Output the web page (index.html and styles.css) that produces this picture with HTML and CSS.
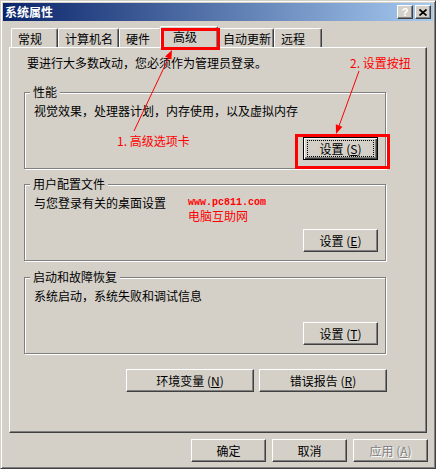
FILE: index.html
```html
<!DOCTYPE html>
<html lang="zh-CN">
<head>
<meta charset="utf-8">
<title>系统属性</title>
<link rel="stylesheet" href="styles.css">
</head>
<body>
<div class="window">
  <div class="titlebar">
    <span class="title">系统属性</span>
    <div class="caption-btns">
      <button class="cap-btn help">?</button>
      <button class="cap-btn close"><svg width="8" height="7" viewBox="0 0 8 7"><path d="M0.5 0.5L7.5 6.5M7.5 0.5L0.5 6.5" stroke="#000" stroke-width="1.7" fill="none"/></svg></button>
    </div>
  </div>

  <div class="tabs">
    <div class="tab w-general">常规</div>
    <div class="tab w-name">计算机名</div>
    <div class="tab w-hw">硬件</div>
    <div class="tab w-adv active">高级</div>
    <div class="tab w-upd">自动更新</div>
    <div class="tab w-remote">远程</div>
  </div>

  <div class="panel">
    <p class="intro">要进行大多数改动，您必须作为管理员登录。</p>

    <div class="group">
      <span class="legend">性能</span>
      <p class="desc">视觉效果，处理器计划，内存使用，以及虚拟内存</p>
      <div class="group-actions">
        <button class="btn default"><span class="focus">设置 (<u>S</u>)</span></button>
      </div>
    </div>

    <div class="group">
      <span class="legend">用户配置文件</span>
      <p class="desc">与您登录有关的桌面设置</p>
      <div class="group-actions">
        <button class="btn">设置 (<u>E</u>)</button>
      </div>
    </div>

    <div class="group">
      <span class="legend">启动和故障恢复</span>
      <p class="desc">系统启动，系统失败和调试信息</p>
      <div class="group-actions">
        <button class="btn">设置 (<u>T</u>)</button>
      </div>
    </div>

    <div class="row-actions">
      <button class="btn wide">环境变量 (<u>N</u>)</button>
      <button class="btn wide">错误报告 (<u>R</u>)</button>
    </div>
  </div>

  <div class="dialog-actions">
    <button class="btn">确定</button>
    <button class="btn">取消</button>
    <button class="btn disabled">应用 (<u>A</u>)</button>
  </div>

  <div class="mark mark-tab"></div>
  <div class="mark mark-btn"></div>
  <svg class="arrows" width="436" height="469" viewBox="0 0 436 469">
    <line x1="133" y1="130" x2="168" y2="56" stroke="#f00" stroke-width="1"/>
    <polygon points="171,49 170.4,58.6 164,55.6" fill="#f00"/>
    <line x1="358" y1="70" x2="338" y2="125" stroke="#f00" stroke-width="1"/>
    <polygon points="335,133 341.4,125.7 334.8,123.3" fill="#f00"/>
  </svg>
  <span class="note note-tab">1. 高级选项卡</span>
  <span class="note note-btn">2. 设置按扭</span>
  <div class="watermark">
    <span class="wm-url">www.pc811.com</span>
    <span class="wm-name">电脑互助网</span>
  </div>
</div>
</body>
</html>
```

FILE: styles.css
```css
* { box-sizing: border-box; }
html, body { margin: 0; padding: 0; }
body {
  width: 436px;
  height: 469px;
  overflow: hidden;
  background: #D4D0C8;
  color: #000;
  font: 12px/14px "Noto Sans CJK SC", "Noto Sans", sans-serif;
}
p { margin: 0; }
button { font: inherit; color: inherit; }

.window {
  position: relative;
  width: 436px;
  height: 469px;
  padding: 2px;
  border: 1px solid;
  border-color: #D4D0C8 #404040 #404040 #D4D0C8;
  box-shadow: inset 1px 1px #fff, inset -1px -1px #808080;
  display: flex;
  flex-direction: column;
}

.titlebar {
  height: 18px;
  display: flex;
  align-items: center;
  padding-left: 2px;
  background: linear-gradient(to right, #0A246A, #A6CAF0);
  color: #fff;
  font-weight: bold;
}
.caption-btns { margin-left: auto; display: flex; gap: 2px; padding-right: 2px; }
.cap-btn {
  width: 16px;
  height: 14px;
  padding: 0;
  display: flex;
  align-items: center;
  justify-content: center;
  background: #D4D0C8;
  border: 1px solid;
  border-color: #fff #404040 #404040 #fff;
  box-shadow: inset -1px -1px #808080;
}
.help { font: bold 11px/1 "Liberation Sans", sans-serif; }

.tabs {
  height: 21px;
  margin: 5px 0 0 8px;
  display: flex;
  align-items: flex-end;
}
.tab {
  height: 19px;
  padding: 3px 0 0 6px;
  border-left: 1px solid #fff;
  border-top: 1px solid #fff;
  border-right: 1px solid #404040;
  border-radius: 2px 2px 0 0;
  box-shadow: inset -1px 0 #808080;
  white-space: nowrap;
}
.w-general { width: 47px; }
.w-name { width: 61px; }
.w-hw { width: 43px; }
.w-adv { width: 54px; }
.w-upd { width: 58px; }
.w-remote { width: 48px; }
.tab.active {
  position: relative;
  z-index: 1;
  width: 58px;
  height: 22px;
  margin: 0 -2px -1px;
  padding: 3px 0 0 12px;
  background: #D4D0C8;
}

.panel {
  width: 418px;
  height: 386px;
  margin-left: 6px;
  padding: 8px 0 0 14px;
  border: 1px solid;
  border-color: #fff #404040 #404040 #fff;
  box-shadow: inset -1px -1px #808080;
}
.intro { margin-left: 3px; }

.group {
  position: relative;
  width: 362px;
  margin-top: 15px;
  padding: 11px 7px 8px 9px;
  border: 1px solid #808080;
  box-shadow: 1px 1px #fff, inset 1px 1px #fff;
}
.intro + .group { margin-top: 22px; }
.group + .group + .group { margin-top: 16px; }
.legend {
  position: absolute;
  top: -8px;
  left: 5px;
  padding: 0 3px;
  background: #D4D0C8;
}
.group-actions { display: flex; justify-content: flex-end; margin-top: 19px; }

.btn {
  width: 75px;
  height: 23px;
  padding: 0;
  display: flex;
  align-items: center;
  justify-content: center;
  background: #D4D0C8;
  border: 1px solid;
  border-color: #fff #404040 #404040 #fff;
  box-shadow: inset -1px -1px #808080;
  white-space: pre;
}
.btn.default {
  border-color: #000;
  box-shadow: inset 1px 1px #fff, inset -1px -1px #404040, inset -2px -2px #808080;
}
.focus {
  width: 65px;
  height: 15px;
  display: flex;
  align-items: center;
  justify-content: center;
  outline: 1px dotted #000;
}
.btn.wide { width: 128px; }
.btn.disabled { color: #808080; text-shadow: 1px 1px #fff; }

.row-actions {
  width: 363px;
  margin-top: 15px;
  display: flex;
  justify-content: flex-end;
  gap: 5px;
}

.dialog-actions {
  margin-top: 6px;
  padding-right: 5px;
  display: flex;
  justify-content: flex-end;
  gap: 6px;
}

/* annotation overlays */
.mark { position: absolute; border: 3px solid #f00; z-index: 3; }
.mark-tab { left: 160px; top: 27px; width: 59px; height: 22px; }
.mark-btn { left: 294px; top: 133px; width: 95px; height: 35px; }
.arrows { position: absolute; left: 0; top: 0; z-index: 4; pointer-events: none; }
.note {
  position: absolute;
  z-index: 4;
  color: #f00;
  font-size: 12px;
  line-height: 14px;
  white-space: pre;
}
.note-tab { left: 116px; top: 133px; }
.note-btn { left: 349px; top: 55px; }
.watermark {
  position: absolute;
  left: 187px;
  top: 197px;
  z-index: 4;
  display: flex;
  flex-direction: column;
  gap: 1px;
  color: #f00;
}
.wm-url { font: bold 10px/10px "Liberation Mono", monospace; }
.wm-name { font-size: 12px; line-height: 13px; }
```
